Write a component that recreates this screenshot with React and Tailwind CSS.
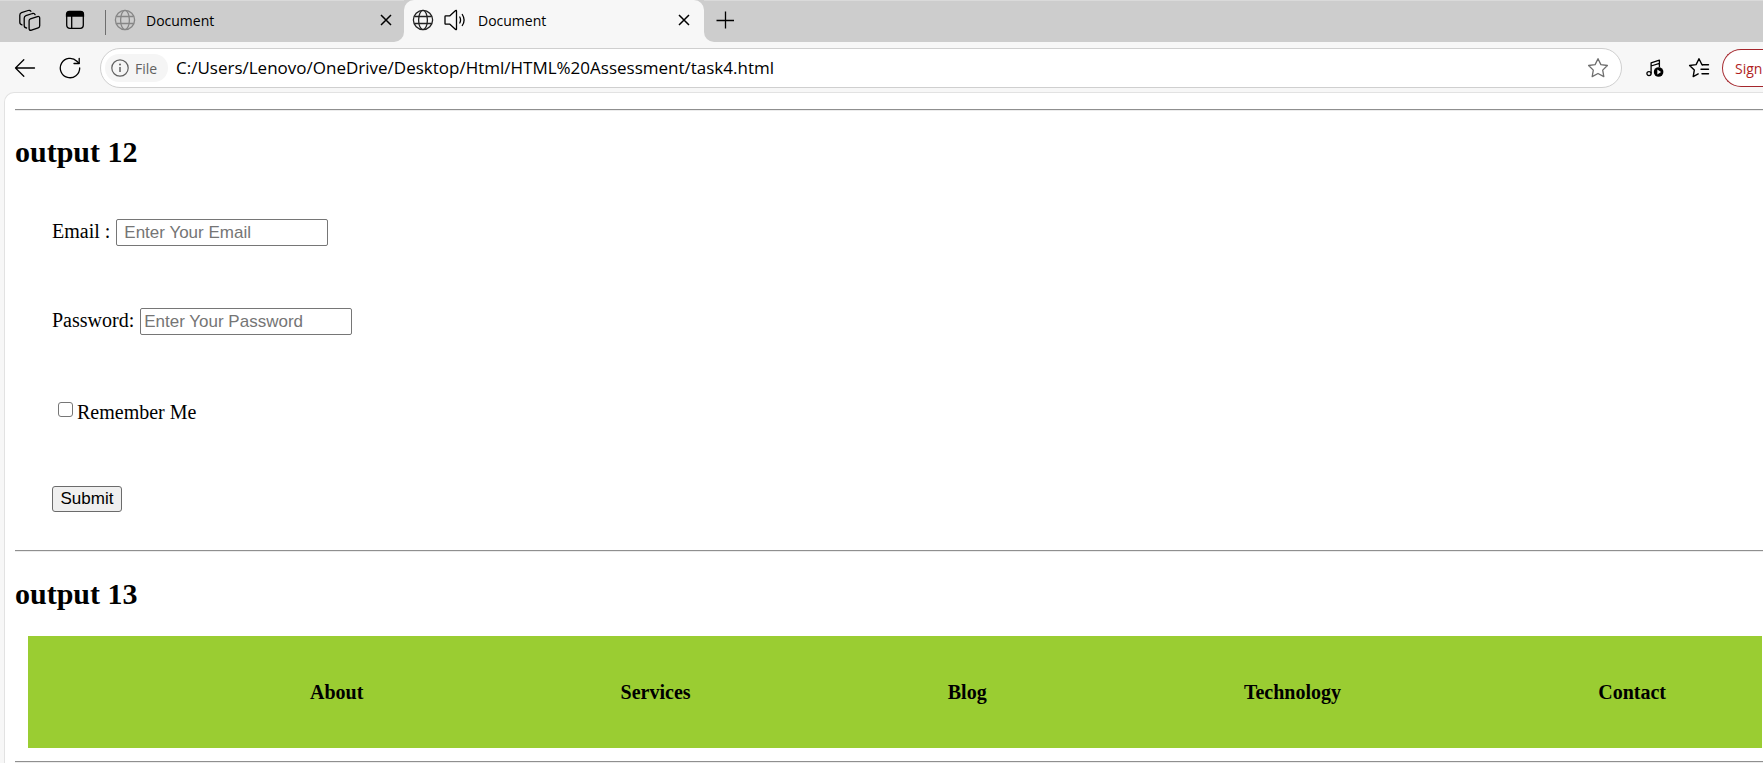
import React from "react";

function Globe({ className }) {
  return (
    <svg className={className} width="22" height="22" viewBox="0 0 22 22" fill="none" stroke="currentColor" strokeWidth="1.3" aria-hidden="true">
      <circle cx="11" cy="11" r="9.6" />
      <ellipse cx="11" cy="11" rx="4.4" ry="9.6" />
      <path d="M2.3 7.5h17.4M2.3 14.5h17.4" />
    </svg>
  );
}

function Cross() {
  return (
    <svg width="12" height="12" viewBox="0 0 12 12" fill="none" stroke="currentColor" strokeWidth="1.5" aria-hidden="true">
      <path d="M1 1l10 10M11 1L1 11" />
    </svg>
  );
}

function WorkspacesIcon() {
  return (
    <svg width="22" height="22" viewBox="0 0 22 22" fill="none" stroke="currentColor" strokeWidth="1.3" strokeLinejoin="round" strokeLinecap="round" aria-hidden="true">
      <path d="M11.4 9.800l7-2.200q2.300-.6 2.300 1.500v7.600q0 1.700-1.500 2.200l-6.700 2.200q-2.400.7-2.400-1.500v-7.800q0-1.500 1.300-2z" />
      <path d="M7.600 19q-2.400-.2-2.400-2.400V9.200q0-1.900 1.700-2.500l6.600-2.200q2-.5 2.600 1.200" />
      <path d="M3 15.800q-2.200-.4-2.200-2.500V6.200q0-1.900 1.700-2.500l6.600-2.200q2-.6 2.800.8" />
    </svg>
  );
}

function TabPaneIcon() {
  return (
    <svg width="20" height="20" viewBox="0 0 20 20" fill="none" stroke="currentColor" strokeWidth="1.3" aria-hidden="true">
      <rect x="1.700" y="1.700" width="16.600" height="16.600" rx="3" />
      <path d="M1.500 6V4.500Q1.500 1.500 4.500 1.500h11q3 0 3 3V6z" fill="currentColor" />
      <path d="M6.700 6v12" />
    </svg>
  );
}

function SpeakerIcon() {
  return (
    <svg width="22" height="22" viewBox="0 0 22 22" fill="none" stroke="currentColor" strokeWidth="1.300" strokeLinejoin="round" strokeLinecap="round" aria-hidden="true">
      <path d="M1.700 6.800h4.200l5.700-5.200q.9-.6.900.500v17.800q0 1.100-.9.500l-5.700-5.200H1.700q-.7 0-.7-.7V7.500q0-.7.7-.7z" />
      <path d="M15.800 8q1.500 3 0 6M18.300 5.500q3.600 5.500 0 11" />
    </svg>
  );
}

function BackIcon() {
  return (
    <svg width="22" height="20" viewBox="0 0 22 20" fill="none" stroke="currentColor" strokeWidth="1.300" strokeLinecap="round" strokeLinejoin="round" aria-hidden="true">
      <path d="M20.500 10H1.500M9.800 1.700L1.500 10l8.300 8.300" />
    </svg>
  );
}

function ReloadIcon() {
  return (
    <svg width="22" height="22" viewBox="0 0 22 22" fill="none" stroke="currentColor" strokeWidth="1.300" strokeLinecap="round" strokeLinejoin="round" aria-hidden="true">
      <path d="M20.700 11A9.700 9.700 0 1 1 17.900 4.200L20 6.300" />
      <path d="M20.200 1.300v5.200H15" />
    </svg>
  );
}

function InfoIcon() {
  return (
    <svg width="18" height="18" viewBox="0 0 18 18" fill="none" stroke="currentColor" strokeWidth="1.200" aria-hidden="true">
      <circle cx="9" cy="9" r="8.200" />
      <path d="M9 8v5" strokeWidth="1.500" />
      <circle cx="9" cy="5.500" r="1" fill="currentColor" stroke="none" />
    </svg>
  );
}

function StarIcon() {
  return (
    <svg width="22" height="22" viewBox="0 0 22 22" fill="none" stroke="currentColor" strokeWidth="1.300" strokeLinejoin="round" aria-hidden="true">
      <path d="M11 1.700l2.900 5.900 6.500.9-4.700 4.600 1.100 6.500L11 16.500l-5.800 3.100 1.100-6.500L1.600 8.500l6.500-.9z" />
    </svg>
  );
}

function MusicIcon() {
  return (
    <svg width="18" height="18" viewBox="0 0 18 18" fill="none" stroke="currentColor" strokeWidth="1.300" strokeLinejoin="round" aria-hidden="true">
      <ellipse cx="3" cy="14.600" rx="2.100" ry="2" />
      <path d="M5.100 14.600V3.800l8.300-2.600v7M5.100 7l8.300-2.600" />
      <circle cx="12.600" cy="13" r="4.800" fill="currentColor" stroke="none" />
      <path d="M11.300 10.600l3.800 2.400-3.800 2.400z" fill="#f7f7f7" stroke="none" />
    </svg>
  );
}

function FavoritesIcon() {
  return (
    <svg width="22" height="22" viewBox="0 0 22 22" fill="none" stroke="currentColor" strokeWidth="1.400" strokeLinejoin="round" strokeLinecap="round" aria-hidden="true">
      <path d="M14.500 7.700L13.600 7 11 1.700 8.100 7.600l-6.500.9 4.700 4.600-1.100 6.500 5-2.700" />
      <path d="M14 7.700h6.500M13 12.200h7.500M14 16.700h6.500" />
    </svg>
  );
}

function TabStrip() {
  return (
    <div className="flex h-[42px] bg-[#f7f7f7] text-[14px]">
      <div className="flex w-[404px] shrink-0 items-center rounded-br-[10px] border-t border-[#dadada] bg-[#cdcdcd] pr-3 pb-[3px] pl-[19px]">
        <button type="button" aria-label="Workspaces" className="mr-6"><WorkspacesIcon /></button>
        <button type="button" aria-label="Tab actions" className="mr-5"><TabPaneIcon /></button>
        <div className="mt-1 mr-2 h-[25px] w-px bg-[#6e6e6e]" />
        <Globe className="mr-2.5 text-[#868686]" />
        <span>Document</span>
        <button type="button" aria-label="Close tab" className="ml-auto"><Cross /></button>
      </div>
      <div className="w-[300px] shrink-0 bg-linear-to-b from-[#cdcdcd] from-50% to-[#f7f7f7] to-50%">
        <div className="flex h-full items-center rounded-t-[10px] bg-[#f7f7f7] pr-3.5 pb-[2px] pl-2">
          <Globe className="mr-2.5 text-[#222]" />
          <button type="button" aria-label="Mute tab" className="mr-3"><SpeakerIcon /></button>
          <span>Document</span>
          <button type="button" aria-label="Close tab" className="ml-auto"><Cross /></button>
        </div>
      </div>
      <div className="flex grow items-center rounded-bl-[10px] border-t border-[#dadada] bg-[#cdcdcd] pb-1 pl-3">
        <button type="button" aria-label="New tab">
          <svg width="18" height="18" viewBox="0 0 18 18" stroke="currentColor" strokeWidth="1.300" aria-hidden="true">
            <path d="M9.500 .5v17M.5 9.500h17.500" />
          </svg>
        </button>
      </div>
    </div>
  );
}

function Toolbar() {
  return (
    <div className="flex h-[50px] items-center pt-[2px] pl-3.5">
      <button type="button" aria-label="Back" className="mr-[23px]"><BackIcon /></button>
      <button type="button" aria-label="Reload" className="mr-[19px]"><ReloadIcon /></button>
      <div className="flex h-10 grow items-center rounded-full border border-[#cfcfcf] bg-white pr-3 pl-1">
        <button type="button" className="mr-2 flex h-7 w-[63px] shrink-0 items-center gap-1.5 rounded-full bg-[#f5f5f5] pl-1.5 text-[14px] text-[#616161]">
          <InfoIcon />
          File
        </button>
        <input
          aria-label="Address"
          className="min-w-0 grow bg-transparent text-[17px] outline-none"
          defaultValue="C:/Users/Lenovo/OneDrive/Desktop/Html/HTML%20Assessment/task4.html"
        />
        <button type="button" aria-label="Add to favorites" className="text-[#6e6e6e]"><StarIcon /></button>
      </div>
      <button type="button" aria-label="Media controls" className="ml-6"><MusicIcon /></button>
      <button type="button" aria-label="Favorites" className="ml-6"><FavoritesIcon /></button>
      <button type="button" className="ml-3 h-[38px] w-[41px] shrink-0 rounded-l-full border-y border-l border-[#a4262c] bg-white pl-3 text-left text-[14px] text-[#b01e1e]">
        Sign
      </button>
    </div>
  );
}

function Rule() {
  return <hr className="h-[2px] border-t border-b border-t-[#8f8f8f] border-b-[#ececec]" />;
}

const field = "h-[27px] w-[212px] rounded-[2px] border border-[#767676] bg-white font-['Liberation_Sans',sans-serif] text-[17px] placeholder:text-[#757575]";

export default function App() {
  return (
    <div className="min-h-screen overflow-hidden bg-[#f7f7f7] font-['Open_Sans','Noto_Sans',sans-serif] text-black">
      <TabStrip />
      <Toolbar />
      <main className="ml-1 rounded-tl-[10px] border-t border-l border-[#e2e2e2] bg-white pt-4 pb-px pl-2.5 font-['Liberation_Serif',serif] text-[20px]">
        <Rule />
        <h2 className="mt-6 text-[30px] leading-[34px] font-bold">output 12</h2>
        <form className="pt-[50px] pb-[38px] pl-[37px]" onSubmit={(e) => e.preventDefault()}>
          <div className="flex h-[27px] items-start gap-1.5">
            <label htmlFor="email" className="leading-6">Email :</label>
            <input id="email" type="email" placeholder="Enter Your Email" className={field + " px-[7px]"} />
          </div>
          <div className="mt-[62px] flex h-[27px] items-start gap-1.5">
            <label htmlFor="password" className="leading-6">Password:</label>
            <input id="password" type="password" placeholder="Enter Your Password" className={field + " px-[3px]"} />
          </div>
          <div className="mt-[63px] flex h-[27px] items-center gap-1 pl-1.5">
            <input id="remember" type="checkbox" className="mb-1 size-[15px] appearance-none rounded-[3px] border border-[#767676] bg-white checked:bg-[#0075ff]" />
            <label htmlFor="remember" className="leading-6">Remember Me</label>
          </div>
          <button type="submit" className="mt-[61px] block h-[26px] w-[70px] rounded-[3px] border border-[#6b6b6b] bg-[#efefef] font-['Liberation_Sans',sans-serif] text-[17px] leading-6">
            Submit
          </button>
        </form>
        <Rule />
        <h2 className="mt-[25px] text-[30px] leading-[34px] font-bold">output 13</h2>
        <nav className="mt-[25px] mr-px mb-[13px] ml-[13px] flex h-28 items-center justify-between bg-[#9acd32] pr-24 pl-[282px] font-bold">
          <a href="#about">About</a>
          <a href="#services">Services</a>
          <a href="#blog">Blog</a>
          <a href="#technology">Technology</a>
          <a href="#contact">Contact</a>
        </nav>
        <Rule />
      </main>
    </div>
  );
}
